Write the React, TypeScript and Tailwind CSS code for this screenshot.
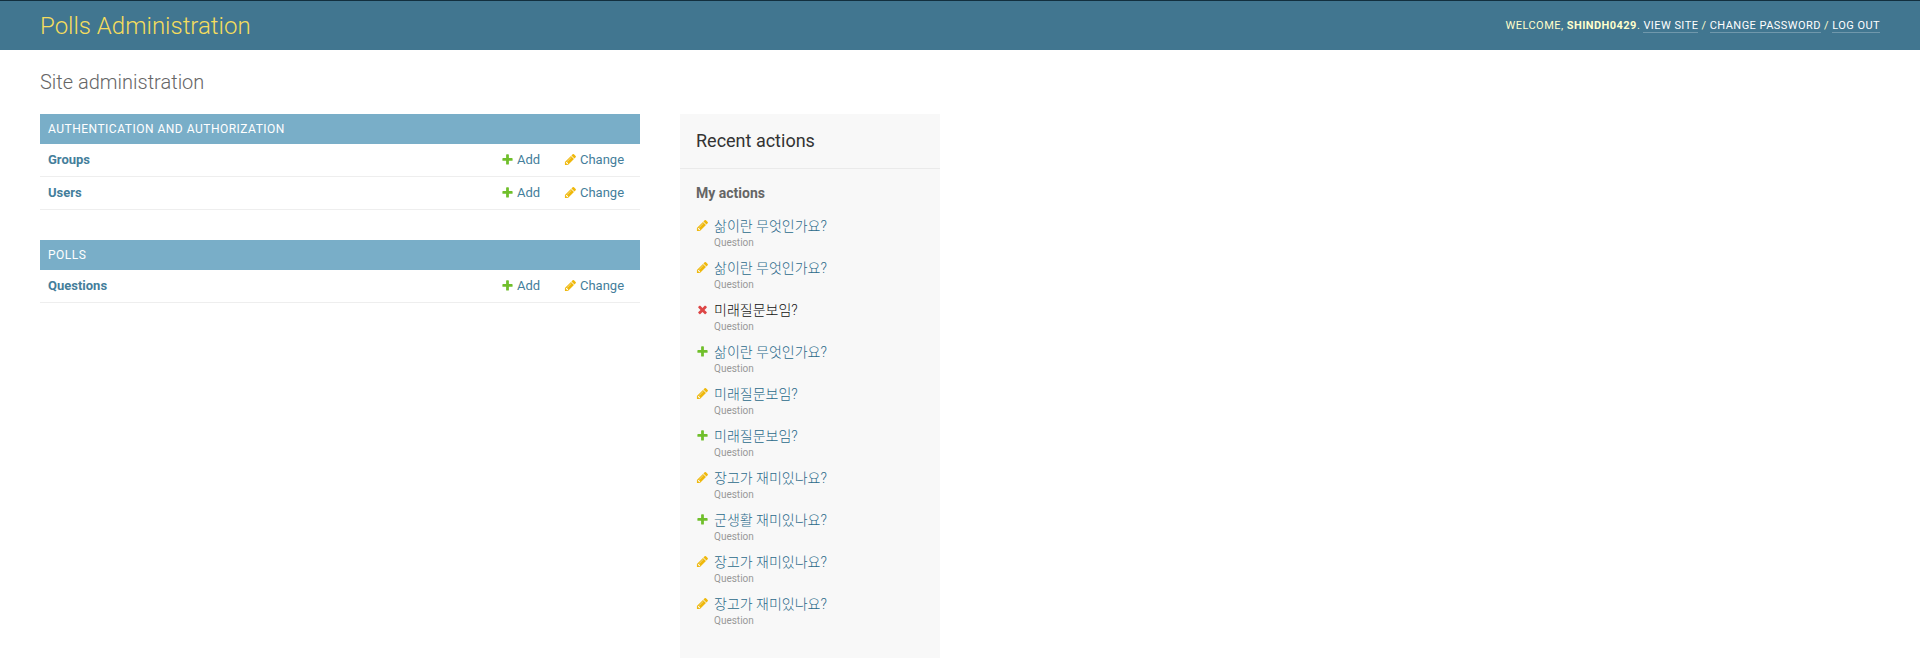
type IconKind = 'add' | 'change' | 'delete';

const icons: Record<IconKind, { path: string; fill: string }> = {
  add: {
    fill: '#70bf2b',
    path: 'M1600 796v192q0 40-28 68t-68 28h-416v416q0 40-28 68t-68 28h-192q-40 0-68-28t-28-68v-416h-416q-40 0-68-28t-28-68v-192q0-40 28-68t68-28h416v-416q0-40 28-68t68-28h192q40 0 68 28t28 68v416h416q40 0 68 28t28 68z',
  },
  change: {
    fill: '#efb80b',
    path: 'M491 1536l91-91-235-235-91 91v107h128v128h107zm523-928q0-22-22-22-10 0-17 7l-542 542q-7 7-7 17 0 22 22 22 10 0 17-7l542-542q7-7 7-17zm-54-192l416 416-832 832h-416v-416zm683 96q0 53-37 90l-166 166-416-416 166-165q36-38 90-38 53 0 91 38l235 234q37 39 37 91z',
  },
  delete: {
    fill: '#dd4646',
    path: 'M1490 1322q0 40-28 68l-136 136q-28 28-68 28t-68-28l-294-294-294 294q-28 28-68 28t-68-28l-136-136q-28-28-28-68t28-68l294-294-294-294q-28-28-28-68t28-68l136-136q28-28 68-28t68 28l294 294 294-294q28-28 68-28t68 28l136 136q28 28 28 68t-28 68l-294 294 294 294q28 28 28 68z',
  },
};

function Icon({ kind }: { kind: IconKind }) {
  return (
    <svg className="size-[13px] shrink-0" viewBox="0 0 1792 1792">
      <path fill={icons[kind].fill} d={icons[kind].path} />
    </svg>
  );
}

function AppModule({ title, models }: { title: string; models: string[] }) {
  return (
    <section className="mb-[30px]">
      <h2 className="flex h-[30px] items-center bg-[#79aec8] px-2 text-[12px] font-normal uppercase tracking-[0.5px] text-white">
        {title}
      </h2>
      {models.map((model) => (
        <div key={model} className="flex h-[33px] items-center border-b border-[#eee] pl-2 text-[13px] text-[#447e9b]">
          <a className="flex-1 font-bold">{model}</a>
          <a className="flex w-[63px] items-center gap-[3px]">
            <span className="pb-px">
              <Icon kind="add" />
            </span>
            Add
          </a>
          <a className="flex w-[76px] items-center gap-[3px]">
            <span className="pb-px">
              <Icon kind="change" />
            </span>
            Change
          </a>
        </div>
      ))}
    </section>
  );
}

const actions: { kind: IconKind; text: string }[] = [
  { kind: 'change', text: '삶이란 무엇인가요?' },
  { kind: 'change', text: '삶이란 무엇인가요?' },
  { kind: 'delete', text: '미래질문보임?' },
  { kind: 'add', text: '삶이란 무엇인가요?' },
  { kind: 'change', text: '미래질문보임?' },
  { kind: 'add', text: '미래질문보임?' },
  { kind: 'change', text: '장고가 재미있나요?' },
  { kind: 'add', text: '군생활 재미있나요?' },
  { kind: 'change', text: '장고가 재미있나요?' },
  { kind: 'change', text: '장고가 재미있나요?' },
];

const toolLink = 'border-b border-white/25 text-white';

export default function App() {
  return (
    <div className="h-[670px] overflow-hidden bg-white font-['Roboto','Noto_Sans_CJK_KR',sans-serif] text-[#333]">
      <header className="flex h-[50px] items-center justify-between border-t border-[#122f3e] bg-[#417690] px-10 text-[#ffc]">
        <h1 className="text-[24px] leading-[30px] font-light text-[#f5dd5d]">Polls Administration</h1>
        <div className="text-[11px] leading-[14px] font-normal uppercase tracking-[0.45px]">
          Welcome, <strong className="font-bold">shindh0429</strong>. <a className={toolLink}>View site</a> /{' '}
          <a className={toolLink}>Change password</a> / <a className={toolLink}>Log out</a>
        </div>
      </header>
      <main className="px-10 pt-5">
        <h1 className="mb-5 text-[20px] leading-[24px] font-light text-[#666]">Site administration</h1>
        <div className="flex items-start gap-10">
          <div className="w-[600px]">
            <AppModule title="Authentication and Authorization" models={['Groups', 'Users']} />
            <AppModule title="Polls" models={['Questions']} />
          </div>
          <aside className="h-[544px] w-[260px] bg-[#f8f8f8]">
            <h2 className="flex h-[55px] items-center border-b border-[#eaeaea] px-4 pb-0.5 text-[18px] font-normal text-[#333]">
              Recent actions
            </h2>
            <h3 className="mt-4 px-4 text-[14px] leading-[17px] font-bold text-[#666]">My actions</h3>
            <ul className="mt-[14px] px-4">
              {actions.map(({ kind, text }, i) => (
                <li key={i} className="flex h-[42px] gap-[5px]">
                  <span className="pt-[3px]">
                    <Icon kind={kind} />
                  </span>
                  <div>
                    <p
                      className={
                        kind === 'delete'
                          ? 'h-5 text-[14px] leading-5 font-light text-[#111]'
                          : 'h-5 text-[14px] leading-5 font-light text-[#2b6a8a]'
                      }
                    >
                      {text}
                    </p>
                    <p className="text-[10px] leading-[14px] text-[#999]">Question</p>
                  </div>
                </li>
              ))}
            </ul>
          </aside>
        </div>
      </main>
    </div>
  );
}
